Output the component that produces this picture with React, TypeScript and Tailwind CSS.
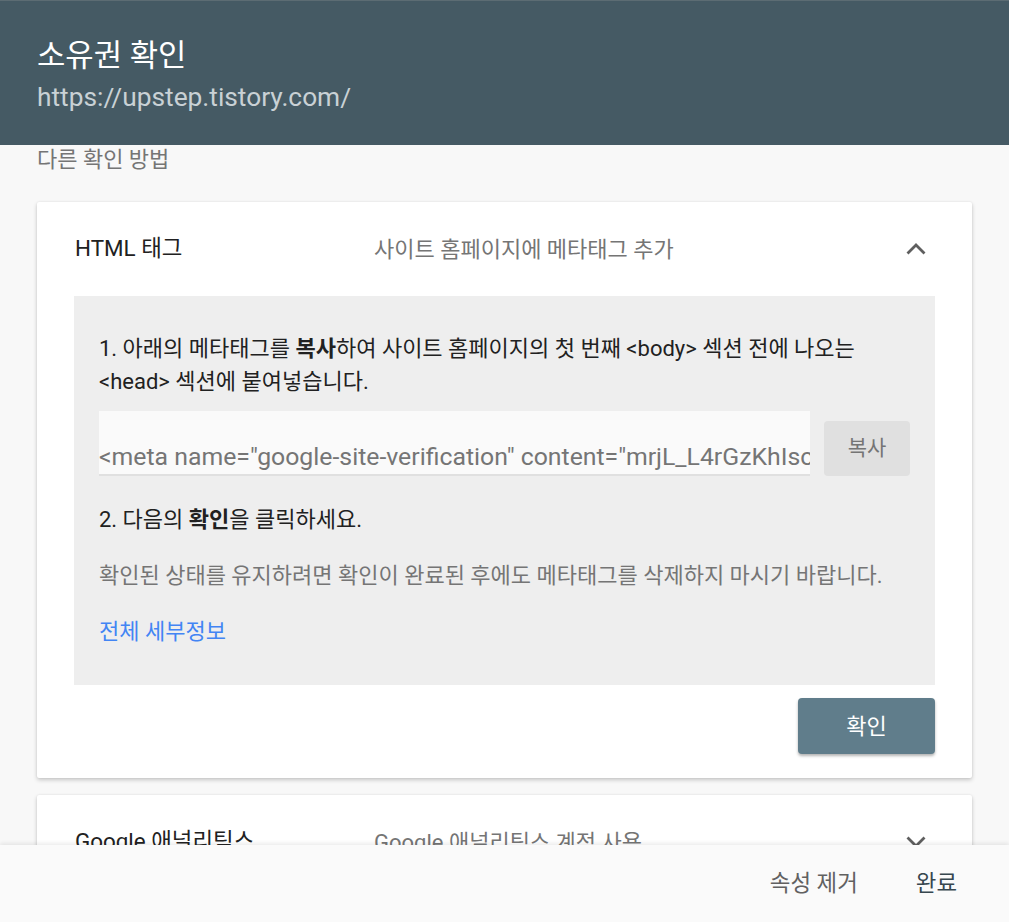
import React from "react";

const font = { fontFamily: 'Roboto, "Noto Sans CJK KR", sans-serif' };

function ChevronUp() {
  return (
    <svg width="20" height="12" viewBox="0 0 20 12" className="text-[#5f5f5f]">
      <polyline points="1.5,10.5 10,2 18.5,10.5" fill="none" stroke="currentColor" strokeWidth="2.8" />
    </svg>
  );
}
function ChevronDown() {
  return (
    <svg width="20" height="12" viewBox="0 0 20 12" className="text-[#5f5f5f]">
      <polyline points="1.5,1.5 10,10 18.5,1.5" fill="none" stroke="currentColor" strokeWidth="2.8" />
    </svg>
  );
}

export default function App() {
  return (
    <div style={font} className="w-[1009px] h-[922px] flex flex-col bg-[#f8f8f8] overflow-hidden">
      <header className="h-[145px] shrink-0 bg-[#455a64] px-[37px] pt-[35px] border-t border-[#5c6c73]">
        <div className="text-[30.8px] leading-[40px] text-white">소유권 확인</div>
        <div className="text-[26.3px] leading-[42px] text-[#c9d1d5]">https://upstep.tistory.com/</div>
      </header>
      <main className="flex-1 overflow-hidden">
        <div className="px-[37px] text-[22px] leading-[30px] text-[#757575]">다른 확인 방법</div>
        <div className="mx-[37px] mt-[27px] bg-white rounded-[2px] shadow-[0_2px_4px_rgba(0,0,0,0.2),0_0_2px_rgba(0,0,0,0.08)]">
          <div className="h-[94px] flex items-center pl-[38px] pr-[46px]">
            <div className="w-[299px] text-[22.4px] text-[#212121]">HTML 태그</div>
            <div className="flex-1 text-[22px] text-[#757575]">사이트 홈페이지에 메타태그 추가</div>
            <ChevronUp />
          </div>
          <div className="mx-[37px] bg-[#eeeeee] px-[25px] pt-[36px] pb-[37px] text-[22px] leading-[33px]">
            <p className="text-[#212121]">
              1. 아래의 메타태그를 <b className="font-bold">복사</b>하여 사이트 홈페이지의 첫 번째 &lt;body&gt; 섹션 전에 나오는 &lt;head&gt; 섹션에 붙여넣습니다.
            </p>
            <div className="mt-[13px] flex items-end gap-[14px]">
              <div className="flex-1 h-[65px] bg-[#fafafa] border-b-2 border-[#e0e0e0] overflow-hidden whitespace-nowrap text-[24.8px] leading-[33px] text-[#757575] flex items-end pb-[1px]">
                &lt;meta name="google-site-verification" content="mrjL_L4rGzKhIsc8pQ2vXn" /&gt;
              </div>
              <button className="w-[86px] h-[55px] rounded-[4px] bg-[#e0e0e0] text-[#757575] text-[21px] shrink-0">복사</button>
            </div>
            <p className="mt-[27px] text-[#212121]">
              2. 다음의 <b className="font-bold">확인</b>을 클릭하세요.
            </p>
            <p className="mt-[23px] text-[#757575]">확인된 상태를 유지하려면 확인이 완료된 후에도 메타태그를 삭제하지 마시기 바랍니다.</p>
            <p className="mt-[23px] text-[#4285f4]">전체 세부정보</p>
          </div>
          <div className="flex justify-end px-[37px] pt-[13px] pb-[24px]">
            <button className="w-[137px] h-[56px] rounded-[4px] bg-[#607d8b] text-white text-[22px] shadow-[0_2px_3px_rgba(0,0,0,0.3)]">확인</button>
          </div>
        </div>
        <div className="mx-[37px] mt-[17px] bg-white rounded-[2px] shadow-[0_2px_4px_rgba(0,0,0,0.2),0_0_2px_rgba(0,0,0,0.08)]">
          <div className="h-[94px] flex items-center pl-[38px] pr-[46px]">
            <div className="w-[299px] text-[22.4px] text-[#212121]">Google 애널리틱스</div>
            <div className="flex-1 text-[22px] text-[#757575]">Google 애널리틱스 계정 사용</div>
            <ChevronDown />
          </div>
        </div>
      </main>
      <footer className="relative z-10 h-[77px] shrink-0 bg-[#fafafa] shadow-[0_-2px_4px_rgba(0,0,0,0.08)] flex items-center justify-end pr-[52px] gap-[58px] text-[22.4px]">
        <span className="text-[#616161]">속성 제거</span>
        <span className="text-[#37474f]">완료</span>
      </footer>
    </div>
  );
}
